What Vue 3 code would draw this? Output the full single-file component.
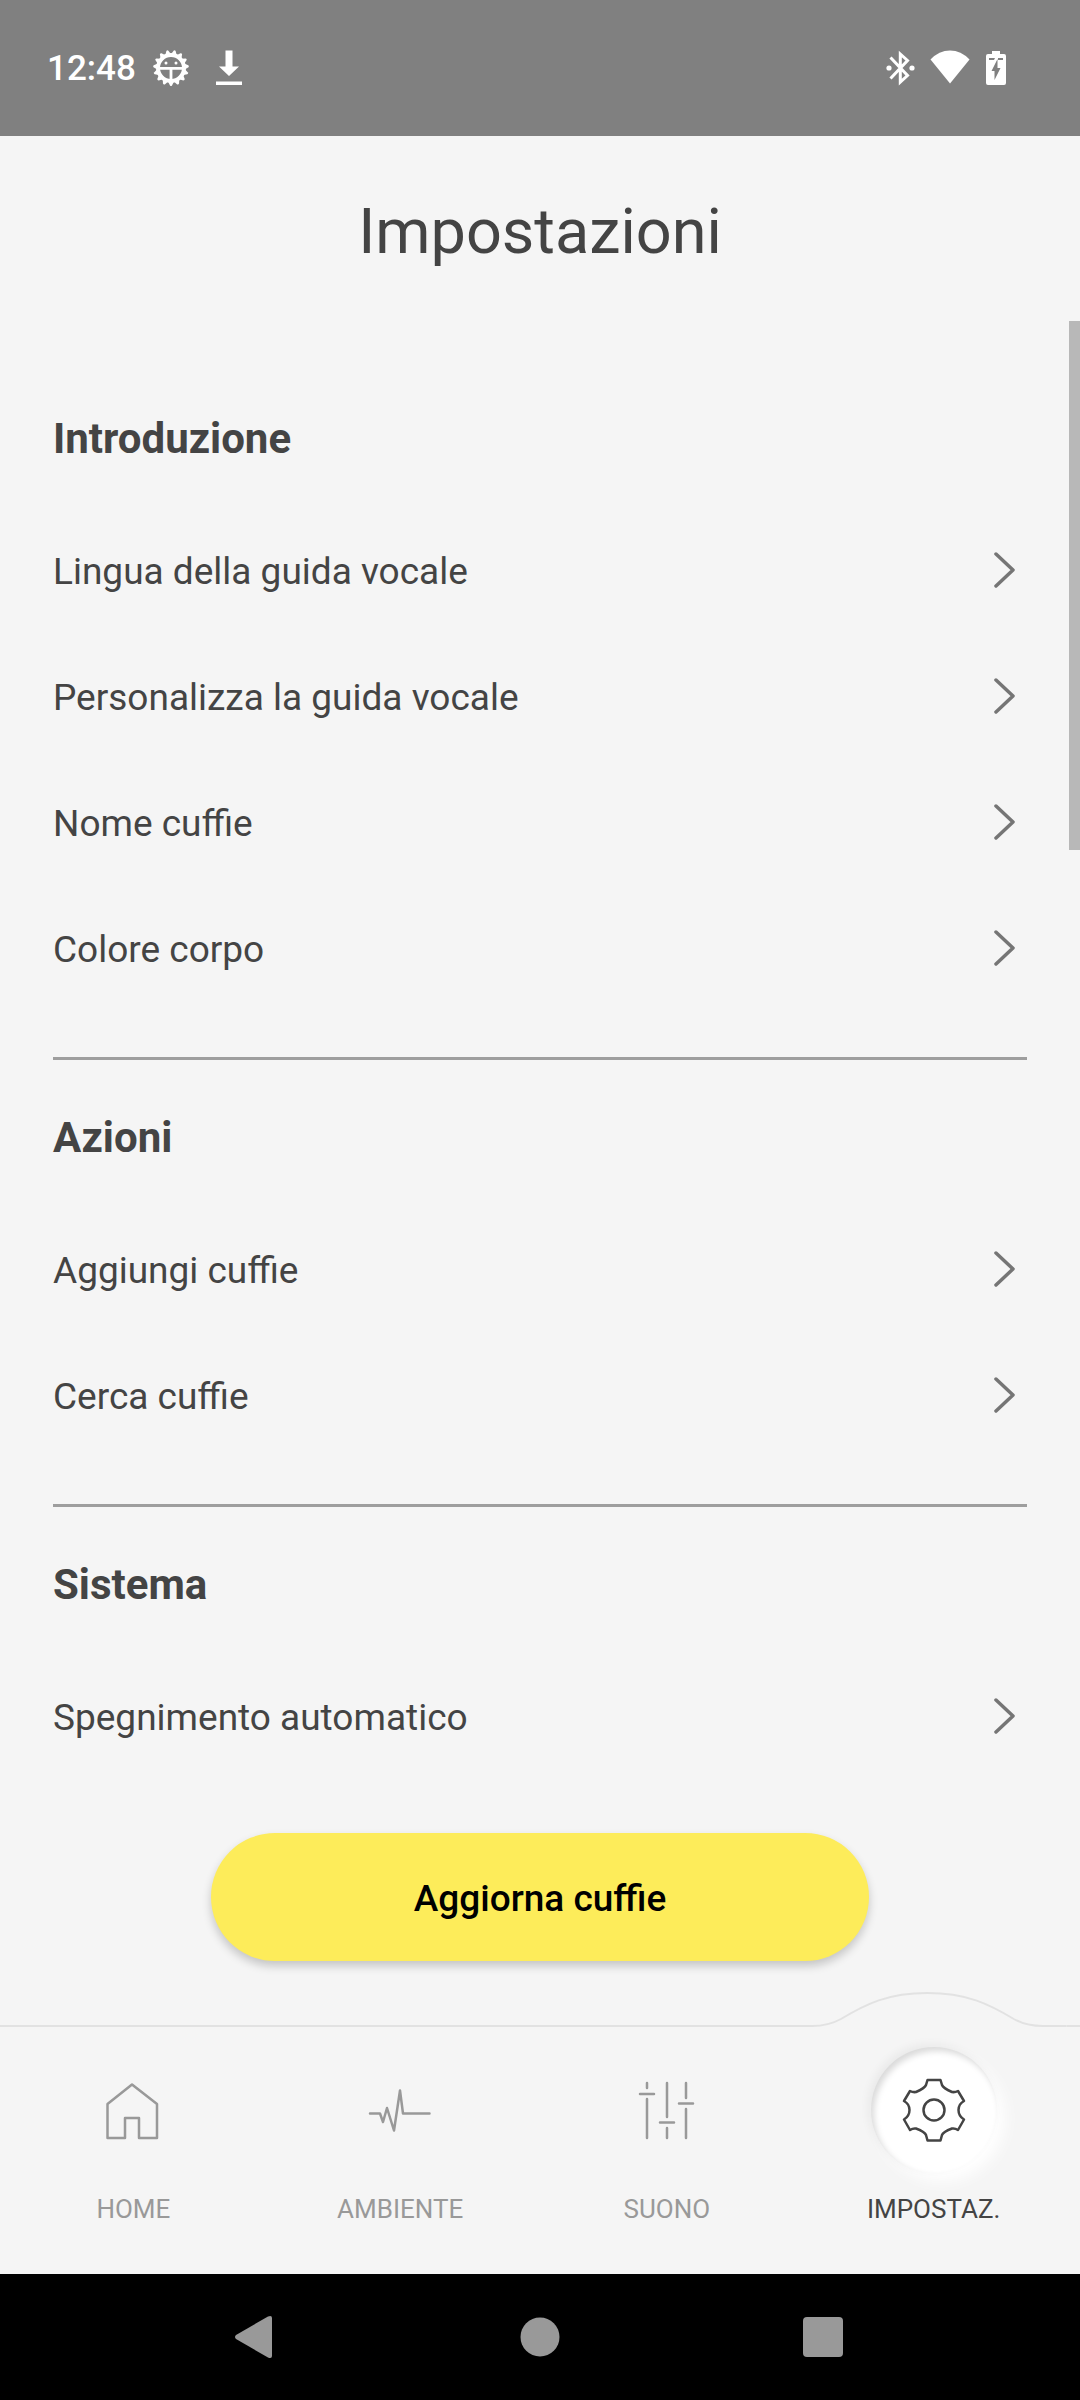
<script setup>
import { ref } from 'vue'

const sections = [
  {
    id: 'introduzione',
    title: 'Introduzione',
    items: ['Lingua della guida vocale', 'Personalizza la guida vocale', 'Nome cuffie', 'Colore corpo'],
  },
  { id: 'azioni', title: 'Azioni', items: ['Aggiungi cuffie', 'Cerca cuffie'] },
  { id: 'sistema', title: 'Sistema', items: ['Spegnimento automatico'] },
]

const tabs = [
  { id: 'home', label: 'HOME' },
  { id: 'ambiente', label: 'AMBIENTE' },
  { id: 'suono', label: 'SUONO' },
  { id: 'impostazioni', label: 'IMPOSTAZ.' },
]
const active = ref('impostazioni')

// Fifteen teeth around the system badge, one pointing straight down.
const teeth = Array.from({ length: 15 }, (_, i) => i * 24)
</script>

<template>
  <div class="screen">
    <div class="status">
      <div class="status-group">
        <time class="clock">12:48</time>
        <svg class="badge" width="38" height="38" viewBox="-19 -19 38 38" aria-hidden="true">
          <circle r="13" fill="none" stroke="#fff" stroke-width="4" />
          <path
            v-for="angle in teeth"
            :key="angle"
            d="M-3 13.5L-1 17.5Q0 18.5 1 17.5L3 13.5z"
            fill="#fff"
            :transform="`rotate(${angle})`"
          />
          <path d="M-12 0.3H12M0 0V12" stroke="#fff" stroke-width="2.8" />
          <circle cx="-5" cy="-5" r="1.5" fill="#fff" />
          <circle cx="5" cy="-5" r="1.5" fill="#fff" />
        </svg>
        <svg class="download" width="26" height="36" viewBox="0 0 26 36" aria-hidden="true">
          <path d="M9.5 0.5H16.5V16.5H23L13 26L3 16.5H9.5zM0 31.5H26V35H0z" fill="#fff" />
        </svg>
      </div>
      <div class="status-group">
        <svg width="30" height="36" viewBox="0 0 30 36" aria-hidden="true">
          <path
            d="M4.5 7.5L21.5 25.5L14.3 32V4L21.5 10.5L4.5 28.5"
            fill="none"
            stroke="#fff"
            stroke-width="3"
          />
          <circle cx="3" cy="18" r="2.6" fill="#fff" />
          <circle cx="26" cy="18" r="2.6" fill="#fff" />
        </svg>
        <svg class="wifi" width="40" height="36" viewBox="0 0 40 36" aria-hidden="true">
          <path d="M20 33.5L0.5 9.5Q9 0.5 20 0.5T39.5 9.5z" fill="#fff" />
        </svg>
        <svg class="battery" width="20" height="36" viewBox="0 0 20 36" aria-hidden="true">
          <path
            d="M6 1H14V4H18Q20 4 20 6V33Q20 35 18 35H2Q0 35 0 33V6Q0 4 2 4H6z"
            fill="#fff"
          />
          <path d="M3 8H9L8 10H3zM12 8H17V10H12zM11.5 9V18H14.5L8.5 30V21H5.5z" fill="#808080" />
        </svg>
      </div>
    </div>

    <header class="header">
      <h1>Impostazioni</h1>
    </header>

    <main class="content">
      <section v-for="s in sections" :key="s.id" class="section" :aria-labelledby="s.id">
        <h2 :id="s.id">{{ s.title }}</h2>
        <ul>
          <li v-for="item in s.items" :key="item">
            <button type="button" class="row">
              <span>{{ item }}</span>
              <svg width="22" height="40" viewBox="0 1 22 40" aria-hidden="true">
                <path
                  d="M2 3L19 19L2 35"
                  fill="none"
                  stroke="#757575"
                  stroke-width="3.5"
                  stroke-linecap="round"
                  stroke-linejoin="round"
                />
              </svg>
            </button>
          </li>
        </ul>
      </section>
      <div class="scrollbar" aria-hidden="true"></div>
    </main>

    <div class="actions">
      <button type="button" class="update">Aggiorna cuffie</button>
    </div>

    <nav class="nav">
      <div class="edge" aria-hidden="true">
        <template v-for="tab in tabs" :key="tab.id">
          <svg v-if="tab.id === active" viewBox="0 -1 267 38" preserveAspectRatio="none">
            <path
              d="M0 36H12C24 36 32 34 41 29C66 14 88 3 127.5 3C167 3 189 14 214 29C223 34 231 36 243 36H267"
              fill="none"
              stroke="#e2e2e2"
              stroke-width="2"
            />
          </svg>
          <span v-else></span>
        </template>
        <span class="edge-end"></span>
      </div>

      <div class="tabs">
        <a
          v-for="tab in tabs"
          :key="tab.id"
          :href="'#' + tab.id"
          class="tab"
          :class="{ active: tab.id === active }"
          :aria-current="tab.id === active ? 'page' : undefined"
          @click.prevent="active = tab.id"
        >
          <span class="tab-icon">
            <svg
              width="64"
              height="64"
              viewBox="-32 -32 64 64"
              fill="none"
              stroke="currentColor"
              stroke-width="2.5"
              stroke-linecap="round"
              stroke-linejoin="round"
              aria-hidden="true"
            >
              <path v-if="tab.id === 'home'" d="M-1 -25.5L24 -6V28H6V8H-8V28H-25.5V-6z" />
              <path
                v-else-if="tab.id === 'ambiente'"
                d="M-30 3.5H-20L-17 12L-13 -2L-6 20.5L0 -19.5L3 3.5H29.5"
              />
              <path
                v-else-if="tab.id === 'suono'"
                d="M-20 -27V-22M-27 -16H-13M-20 -11V28M0 -27V7M-7 12.5H7M0 18V28M19 -27V-12M12 -6.5H26M19 -1V28"
              />
              <g v-else>
                <path
                  d="M-6.5 -30H6.5L8 -25Q9 -22 18 -18Q21 -17.5 24 -19L30 -9Q24.5 -6 24.5 0T30 9.5L24 20Q21 18 18 18.5Q9 22 8 25L6.5 30.5H-6.5L-8 25Q-9 22 -18 18.5Q-21 18 -24 20L-30 9.5Q-24.5 6 -24.5 0T-30 -9L-24 -19Q-21 -17.5 -18 -18Q-9 -22 -8 -25z"
                />
                <circle r="10.5" />
              </g>
            </svg>
          </span>
          <span class="tab-label">{{ tab.label }}</span>
        </a>
      </div>
    </nav>

    <div class="system">
      <button type="button" aria-label="Indietro">
        <svg width="44" height="44" viewBox="0 0 44 44">
          <path d="M2 20Q0 22 2 24L34 42.5Q38 44 38 41V3Q38 0 34 1.5z" />
        </svg>
      </button>
      <button type="button" aria-label="Schermata Home">
        <svg width="44" height="44" viewBox="0 0 44 44"><circle cx="22" cy="22" r="19.5" /></svg>
      </button>
      <button type="button" aria-label="App recenti">
        <svg width="44" height="44" viewBox="0 0 44 44">
          <rect x="1" y="2" width="40" height="40" rx="4" />
        </svg>
      </button>
    </div>
  </div>
</template>

<style>
body {
  margin: 0;
  background: #f5f5f5;
}
</style>

<style scoped>
.screen {
  display: flex;
  flex-direction: column;
  min-height: 100vh;
  background: #f5f5f5;
  color: #444;
  font-family: Roboto, sans-serif;
}

button {
  border: 0;
  padding: 0;
  background: none;
  color: inherit;
  font: inherit;
  cursor: pointer;
}

svg {
  display: block;
}

.status {
  display: flex;
  justify-content: space-between;
  align-items: center;
  height: 136px;
  padding: 0 74px 0 47px;
  background: #808080;
  color: #fff;
}

.status-group {
  display: flex;
  align-items: center;
}

.clock {
  font-size: 35px;
  font-weight: 500;
}

.badge {
  margin-left: 16px;
}

.download {
  margin-left: 26px;
}

.wifi {
  margin-left: 14px;
}

.battery {
  margin-left: 16px;
}

.header {
  padding: 59px 24px 52px;
  text-align: center;
}

h1 {
  margin: 0;
  font-size: 63px;
  font-weight: 400;
  line-height: 74px;
}

.content {
  position: relative;
  flex: 1;
  padding: 40px 53px 0;
}

.section {
  padding: 53px 0 45px;
}

.section + .section {
  border-top: 3px solid #9e9e9e;
}

.section:last-of-type {
  padding-bottom: 0;
}

h2 {
  margin: 0 0 44px;
  font-size: 42px;
  font-weight: 700;
  line-height: 50px;
}

ul {
  margin: 0;
  padding: 0;
  list-style: none;
}

.row {
  display: flex;
  justify-content: space-between;
  align-items: center;
  width: 100%;
  height: 126px;
  padding: 2px 11px 0 0;
  font-size: 37px;
  line-height: 44px;
  text-align: left;
}

.scrollbar {
  position: absolute;
  top: 0;
  right: 0;
  width: 11px;
  height: 529px;
  background: #b8b8b8;
}

.actions {
  display: flex;
  justify-content: center;
  padding: 52px 0 28px;
}

.update {
  width: 61%;
  height: 128px;
  padding-top: 2px;
  border-radius: 64px;
  background: #fdec5a;
  box-shadow: 0 5px 10px rgba(0, 0, 0, 0.2);
  color: #000;
  font-size: 37px;
  font-weight: 500;
}

.edge {
  display: flex;
  height: 38px;
}

.edge span {
  flex: 1;
  box-sizing: border-box;
  border-bottom: 2px solid #e2e2e2;
}

.edge svg {
  flex: 1;
  min-width: 0;
  height: 38px;
}

.edge .edge-end {
  flex: 0 0 13px;
}

.tabs {
  display: flex;
  padding: 20px 13px 50px 0;
}

.tab {
  display: flex;
  flex: 1;
  flex-direction: column;
  align-items: center;
  gap: 21px;
  color: #999;
  font-size: 26px;
  line-height: 30px;
  text-decoration: none;
}

.tab-icon {
  display: flex;
  justify-content: center;
  align-items: center;
  width: 126px;
  height: 126px;
  border-radius: 50%;
}

.active {
  color: #444;
}

.active .tab-icon {
  background: #fff;
  box-shadow:
    inset 3px 4px 6px rgba(0, 0, 0, 0.15),
    -3px -3px 10px rgba(0, 0, 0, 0.05),
    8px 8px 16px #fff;
}

.system {
  display: flex;
  justify-content: center;
  gap: 240px;
  height: 126px;
  background: #000;
}

.system svg {
  fill: #999;
}
</style>
